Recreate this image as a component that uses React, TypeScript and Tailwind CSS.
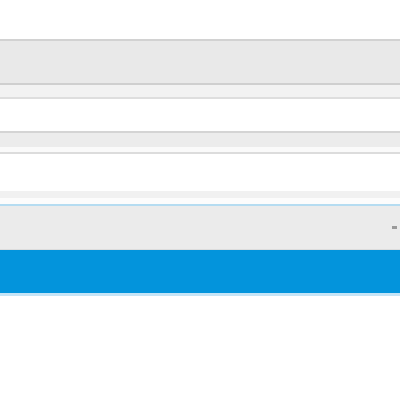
export default function App() {
  return (
    <div className="w-[400px] h-[400px] bg-white flex flex-col overflow-hidden">
      <div className="h-[39px] bg-white shrink-0" />
      <div className="h-[2px] bg-[#d2d2d2] shrink-0" />
      <div className="h-[42px] bg-[#e9e9e9] shrink-0" />
      <div className="h-[2px] bg-[#cfcfcf] shrink-0" />
      <div className="h-[12px] bg-[#f2f2f2] shrink-0" />
      <div className="h-[2px] bg-[#dedede] shrink-0" />
      <div className="h-[32px] bg-white shrink-0" />
      <div className="h-[2px] bg-[#d4d4d4] shrink-0" />
      <div className="h-[14px] bg-[#ececec] shrink-0" />
      <div className="h-[5px] bg-[#fafafa] shrink-0" />
      <div className="h-[2px] bg-[#dcdcdc] shrink-0" />
      <div className="h-[37px] bg-white shrink-0" />
      <div className="h-[7px] bg-[#f1f1f1] shrink-0" />
      <div className="h-[6px] bg-[#fcfcfc] shrink-0" />
      <div className="h-[2px] bg-[#b5dcf1] shrink-0" />
      <div className="h-[43px] bg-[#ebebeb] shrink-0 flex items-center justify-end pr-[3px]">
        <div className="w-[5px] h-[3px] bg-[#9a9a9a]" />
      </div>
      <div className="h-[1px] bg-[#dcdcdc] shrink-0" />
      <div className="h-[43px] bg-[#0394dc] shrink-0" />
      <div className="h-[3px] bg-[#c5e4f6] shrink-0" />
    </div>
  );
}
